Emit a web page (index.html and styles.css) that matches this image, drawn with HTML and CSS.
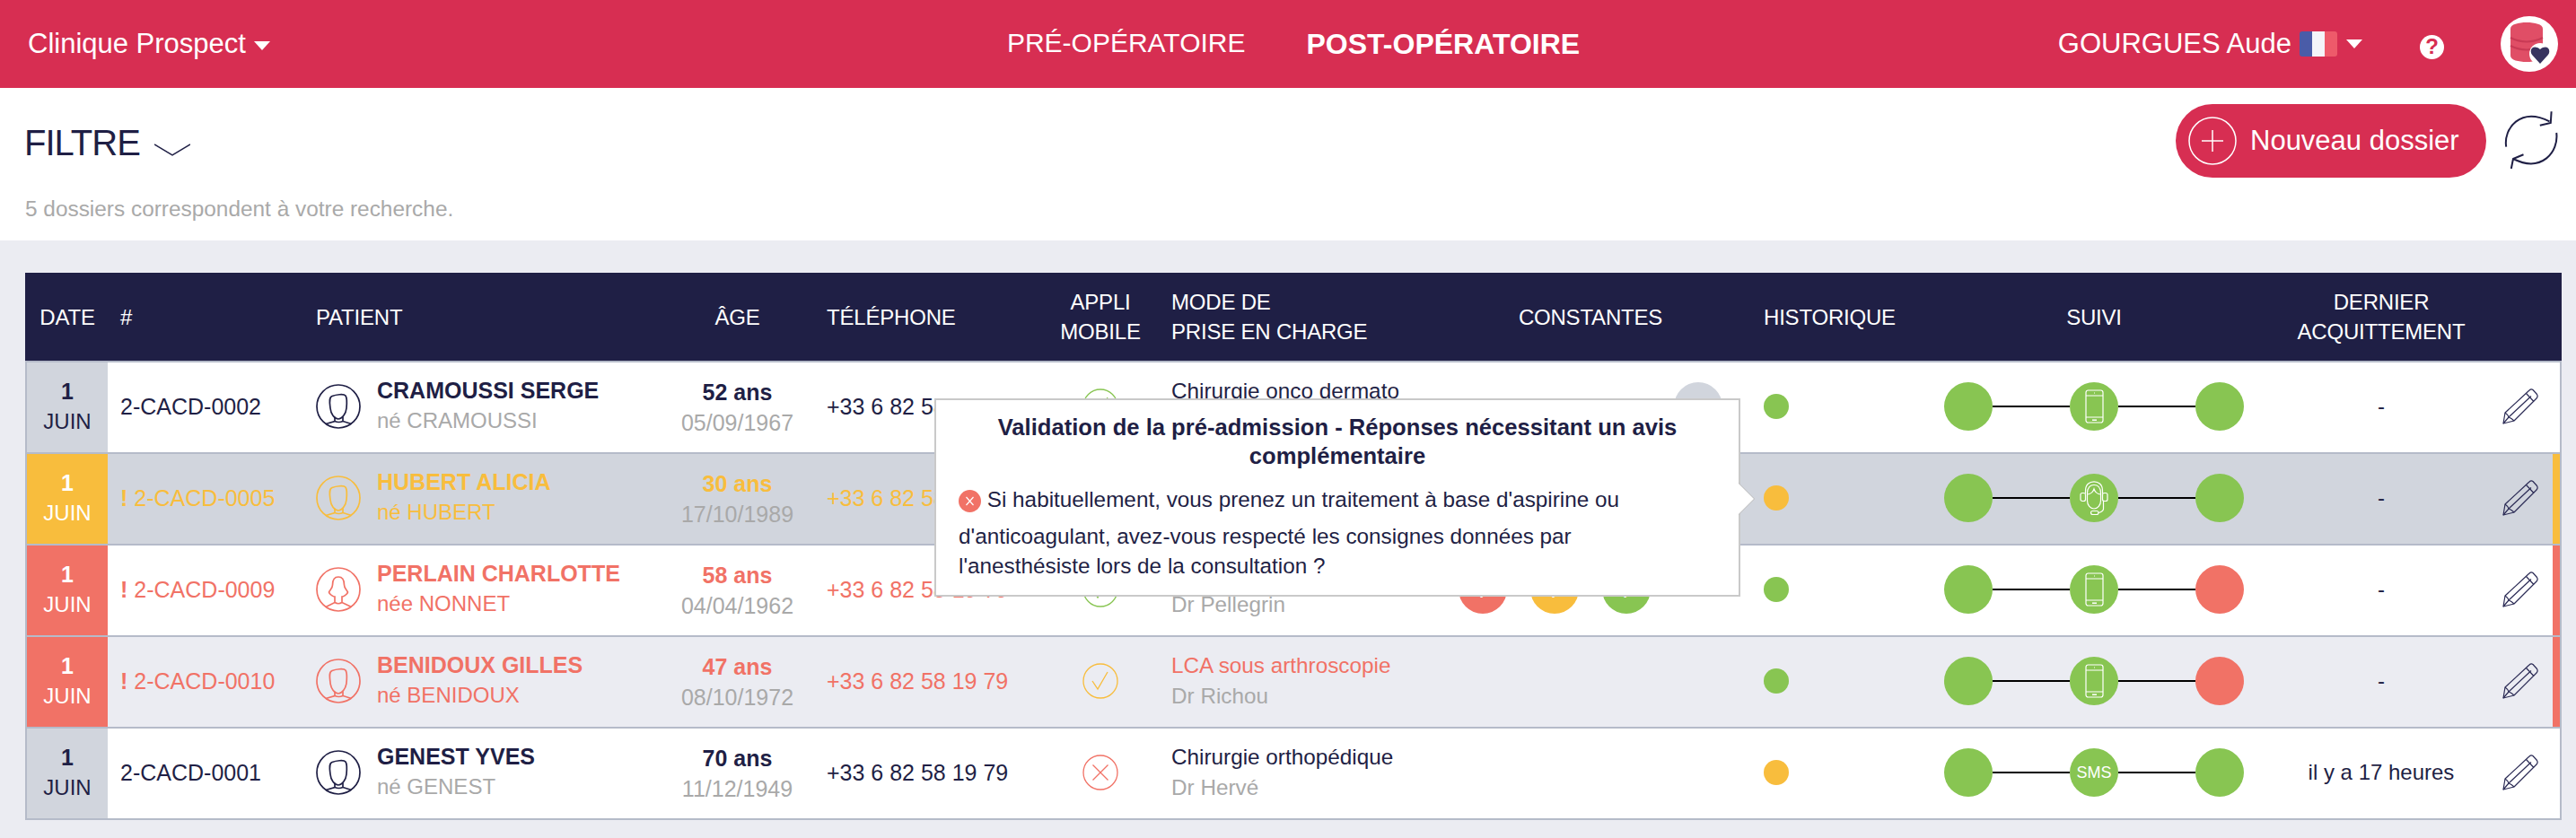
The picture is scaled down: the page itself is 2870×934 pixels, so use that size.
FILE: index.html
```html
<!DOCTYPE html>
<html lang="fr">
<head>
  <meta charset="UTF-8" />
  <title>Dossiers post-opératoires</title>
  <link rel="stylesheet" href="styles.css">
</head>
<body>
  <svg class="sprite" xmlns="http://www.w3.org/2000/svg">
    <symbol id="man" viewBox="0 0 50 50">
      <g fill="none" stroke="currentColor" stroke-width="1.7">
        <circle cx="25" cy="25" r="24"/>
        <path d="M18 13.5C22 12 31 10.5 33 13C35 16 34.5 22 34 27C33.5 33 29 39 25 39C20.5 39 16.5 33 16 27C15.5 22 14 15 18 13.5Z"/>
        <path d="M11 44.500L21 41.500V36.500M30 36.500V41.500L39.500 44.500M21 41.500Q25.500 43.500 30 41.500"/>
      </g>
    </symbol>
    <symbol id="woman" viewBox="0 0 50 50">
      <g fill="none" stroke="currentColor" stroke-width="1.7">
        <circle cx="25" cy="25" r="24"/>
        <path d="M25 11C20 11 18.500 15 18.500 20C18.500 24 15 26 14.500 28C15 31 20 33 21 33V39.500L11 44.500M25 11C30 11 31.500 15 31.500 20C31.500 24 35 26 35.500 28C35 31 30 33 29 33V39.500L39.500 44.500M21 39.500Q25 42 29 39.500"/>
      </g>
    </symbol>
    <symbol id="phone" viewBox="0 0 21 38">
      <g fill="none" stroke="#fff" stroke-width="1.200">
        <rect x="1" y="1" width="19" height="36" rx="2.500"/>
        <path d="M1 7H20M1 31H20"/>
        <path d="M8 34.200H13" stroke-width="1.500"/>
        <path d="M10 4H11"/>
      </g>
    </symbol>
    <symbol id="headset" viewBox="0 0 32 38">
      <g fill="none" stroke="#fff" stroke-width="1.200">
        <path d="M6.500 14V11C6.500 4 11 .8 16 .8C21 .8 25.500 4 25.500 11V14"/>
        <path d="M8.500 14C8.500 7 12 4.500 16 4.500C20 4.500 23.500 7 23.500 14V22C23.500 27 20 31 16 31C12 31 8.500 27 8.500 22Z"/>
        <path d="M8.500 15C12 15 15 12 16 9C17 12 20 15 23.500 15"/>
        <rect x="1" y="13.500" width="5.500" height="9" rx="2"/>
        <rect x="25.500" y="13.500" width="5.500" height="9" rx="2"/>
        <path d="M26.500 22.500V31C26.500 33 25 34.500 21 35.500"/>
        <rect x="12.500" y="33.500" width="8.500" height="4" rx="2"/>
      </g>
    </symbol>
    <symbol id="pencil" viewBox="0 0 40 40">
      <g fill="none" stroke="#2b2b55" stroke-width="1.200" stroke-linejoin="round">
        <path d="M1 39L3 27L30 2Q32 0 34 1.500L38.500 6.500Q40 9 38 11L13 36Z"/>
        <path d="M26.500 5.500L35 14.500M7.500 31.500L32 8.500M3 27Q6 29 7 32Q10 33 13 36M1 39L7 32"/>
      </g>
    </symbol>
    <symbol id="check" viewBox="0 0 40 40">
      <g fill="none" stroke="currentColor" stroke-width="1.300">
        <circle cx="20" cy="20" r="19"/>
        <path d="M11 20L17 29L28 10"/>
      </g>
    </symbol>
    <symbol id="cross" viewBox="0 0 40 40">
      <g fill="none" stroke="currentColor" stroke-width="1.300">
        <circle cx="20" cy="20" r="19"/>
        <path d="M11.500 11.500L28.500 28.500M28.500 11.500L11.500 28.500"/>
      </g>
    </symbol>
  </svg>

  <header class="topbar">
    <div class="clinic">Clinique Prospect <span class="caret"></span></div>
    <nav class="tabs">
      <a class="tab">PRÉ-OPÉRATOIRE</a>
      <a class="tab active">POST-OPÉRATOIRE</a>
    </nav>
    <div class="user">
      <span class="user-name">GOURGUES Aude</span>
      <span class="flag"><i class="flag-b"></i><i class="flag-w"></i><i class="flag-r"></i></span>
      <span class="caret"></span>
      <span class="help">?</span>
      <span class="logo">
        <svg width="46" height="50" viewBox="0 0 46 50">
          <path d="M2 8C2 3 11 1 20 1C29 1 38 3 38 8V38C38 43 29 45 20 45C11 45 2 43 2 38Z" fill="#e04e66"/>
          <path d="M2 18Q20 27 38 18M2 27Q20 36 38 27" fill="none" stroke="#c93a55" stroke-width="2"/>
          <circle cx="35" cy="36" r="12" fill="#fff"/>
          <path d="M35 47L26 37C22 31 28 25 35 31C42 25 48 31 44 37Z" fill="#37335f"/>
        </svg>
      </span>
    </div>
  </header>

  <section class="toolbar">
    <div>
      <div class="filter">FILTRE
        <svg class="chevron" width="40" height="14" viewBox="0 0 40 14"><path d="M0 1L20 13L40 1" fill="none" stroke="#1f1f45" stroke-width="1.500"/></svg>
      </div>
      <p class="count">5 dossiers correspondent à votre recherche.</p>
    </div>
    <div class="actions">
      <button class="new-btn">
        <svg width="54" height="54" viewBox="0 0 54 54"><g fill="none" stroke="#fff" stroke-width="1.500"><circle cx="27" cy="27" r="26"/><path d="M27 15V39M15 27H39"/></g></svg>
        Nouveau dossier
      </button>
      <svg class="refresh" width="60" height="66" viewBox="0 0 60 66">
        <g fill="none" stroke="#1f1f45" stroke-width="2">
          <path d="M2.200 40.700C-1 20 18 -4 50.500 12.300M52.600 1.300L51.800 14L39.800 16.700"/>
          <path d="M58.200 25C61 46 42 70 10 54M21.500 49.300L10 54L7.800 65"/>
        </g>
      </svg>
    </div>
  </section>

  <main class="content">
    <div class="table-wrap">
      <div class="thead cols">
        <div class="th center">DATE</div>
        <div class="th th-num">#</div>
        <div class="th th-patient">PATIENT</div>
        <div class="th center">ÂGE</div>
        <div class="th th-phone">TÉLÉPHONE</div>
        <div class="th center">APPLI<br>MOBILE</div>
        <div class="th th-mode">MODE DE<br>PRISE EN CHARGE</div>
        <div class="th center">CONSTANTES</div>
        <div class="th th-hist">HISTORIQUE</div>
        <div class="th center">SUIVI</div>
        <div class="th center">DERNIER<br>ACQUITTEMENT</div>
        <div class="th"></div>
      </div>

      <div class="tbody">
        <div class="row cols">
          <div class="date"><b>1</b><span>JUIN</span></div>
          <div class="num">2-CACD-0002</div>
          <div class="patient">
            <svg class="avatar"><use href="#man"/></svg>
            <div class="who"><div class="name">CRAMOUSSI SERGE</div><div class="sub">né CRAMOUSSI</div></div>
          </div>
          <div class="age"><b>52 ans</b><span>05/09/1967</span></div>
          <div class="phone">+33 6 82 58 19 79</div>
          <div class="appli ok"><svg class="appli-icon"><use href="#check"/></svg></div>
          <div class="mode"><div class="mode-name">Chirurgie onco dermato</div><div class="doctor">&nbsp;</div></div>
          <div class="constants">
            <span class="c-dot blank"></span><span class="c-dot blank"></span><span class="c-dot blank"></span><span class="c-dot grey">?</span>
          </div>
          <div class="hist"><span class="h-dot green"></span></div>
          <div class="suivi">
            <span class="s-dot green"></span><span class="s-line"></span>
            <span class="s-dot green"><svg class="i-phone"><use href="#phone"/></svg></span><span class="s-line"></span>
            <span class="s-dot green"></span>
          </div>
          <div class="ack">-</div>
          <div class="edit"><svg class="pencil"><use href="#pencil"/></svg></div>
        </div>

        <div class="row cols warn tinted">
          <div class="date"><b>1</b><span>JUIN</span></div>
          <div class="num"><b>!</b> 2-CACD-0005</div>
          <div class="patient">
            <svg class="avatar"><use href="#man"/></svg>
            <div class="who"><div class="name">HUBERT ALICIA</div><div class="sub">né HUBERT</div></div>
          </div>
          <div class="age"><b>30 ans</b><span>17/10/1989</span></div>
          <div class="phone">+33 6 82 58 19 79</div>
          <div class="appli"></div>
          <div class="mode"></div>
          <div class="constants"></div>
          <div class="hist"><span class="h-dot yellow"></span></div>
          <div class="suivi">
            <span class="s-dot green"></span><span class="s-line"></span>
            <span class="s-dot green"><svg class="i-headset"><use href="#headset"/></svg></span><span class="s-line"></span>
            <span class="s-dot green"></span>
          </div>
          <div class="ack">-</div>
          <div class="edit"><svg class="pencil"><use href="#pencil"/></svg></div>
        </div>

        <div class="row cols alert">
          <div class="date"><b>1</b><span>JUIN</span></div>
          <div class="num"><b>!</b> 2-CACD-0009</div>
          <div class="patient">
            <svg class="avatar"><use href="#woman"/></svg>
            <div class="who"><div class="name">PERLAIN CHARLOTTE</div><div class="sub">née NONNET</div></div>
          </div>
          <div class="age"><b>58 ans</b><span>04/04/1962</span></div>
          <div class="phone">+33 6 82 58 19 79</div>
          <div class="appli ok"><svg class="appli-icon"><use href="#check"/></svg></div>
          <div class="mode"><div class="mode-name">&nbsp;</div><div class="doctor">Dr Pellegrin</div></div>
          <div class="constants">
            <span class="c-dot red">7</span><span class="c-dot yellow">7</span><span class="c-dot green">7</span><span class="c-dot blank"></span>
          </div>
          <div class="hist"><span class="h-dot green"></span></div>
          <div class="suivi">
            <span class="s-dot green"></span><span class="s-line"></span>
            <span class="s-dot green"><svg class="i-phone"><use href="#phone"/></svg></span><span class="s-line"></span>
            <span class="s-dot red"></span>
          </div>
          <div class="ack">-</div>
          <div class="edit"><svg class="pencil"><use href="#pencil"/></svg></div>
        </div>

        <div class="row cols alert light">
          <div class="date"><b>1</b><span>JUIN</span></div>
          <div class="num"><b>!</b> 2-CACD-0010</div>
          <div class="patient">
            <svg class="avatar"><use href="#man"/></svg>
            <div class="who"><div class="name">BENIDOUX GILLES</div><div class="sub">né BENIDOUX</div></div>
          </div>
          <div class="age"><b>47 ans</b><span>08/10/1972</span></div>
          <div class="phone">+33 6 82 58 19 79</div>
          <div class="appli pending"><svg class="appli-icon"><use href="#check"/></svg></div>
          <div class="mode"><div class="mode-name">LCA sous arthroscopie</div><div class="doctor">Dr Richou</div></div>
          <div class="constants"></div>
          <div class="hist"><span class="h-dot green"></span></div>
          <div class="suivi">
            <span class="s-dot green"></span><span class="s-line"></span>
            <span class="s-dot green"><svg class="i-phone"><use href="#phone"/></svg></span><span class="s-line"></span>
            <span class="s-dot red"></span>
          </div>
          <div class="ack">-</div>
          <div class="edit"><svg class="pencil"><use href="#pencil"/></svg></div>
        </div>

        <div class="row cols">
          <div class="date"><b>1</b><span>JUIN</span></div>
          <div class="num">2-CACD-0001</div>
          <div class="patient">
            <svg class="avatar"><use href="#man"/></svg>
            <div class="who"><div class="name">GENEST YVES</div><div class="sub">né GENEST</div></div>
          </div>
          <div class="age"><b>70 ans</b><span>11/12/1949</span></div>
          <div class="phone">+33 6 82 58 19 79</div>
          <div class="appli refused"><svg class="appli-icon"><use href="#cross"/></svg></div>
          <div class="mode"><div class="mode-name">Chirurgie orthopédique</div><div class="doctor">Dr Hervé</div></div>
          <div class="constants"></div>
          <div class="hist"><span class="h-dot yellow"></span></div>
          <div class="suivi">
            <span class="s-dot green"></span><span class="s-line"></span>
            <span class="s-dot green sms">SMS</span><span class="s-line"></span>
            <span class="s-dot green"></span>
          </div>
          <div class="ack">il y a 17 heures</div>
          <div class="edit"><svg class="pencil"><use href="#pencil"/></svg></div>
        </div>
      </div>

      <div class="tooltip">
        <h3 class="tooltip-title">Validation de la pré-admission - Réponses nécessitant un avis complémentaire</h3>
        <p class="tooltip-text"><svg class="tooltip-icon" width="25" height="25" viewBox="0 0 25 25"><circle cx="12.500" cy="12.500" r="12.500" fill="#f17266"/><path d="M8.500 8L16.500 17M16.500 8L8.500 17" stroke="#fff" stroke-width="1.200"/></svg> Si habituellement, vous prenez un traitement à base d'aspirine ou d'anticoagulant, avez-vous respecté les consignes données par l'anesthésiste lors de la consultation ?</p>
      </div>
    </div>
  </main>
</body>
</html>
```

FILE: styles.css
```css
* {
  box-sizing: border-box;
}
html, body {
  height: 100%;
}
body {
  margin: 0;
  background: #ebecf2;
  color: #1f1f45;
  font-family: "Liberation Sans", Arial, sans-serif;
  font-size: 25px;
  overflow: hidden;
}
.sprite {
  position: absolute;
  width: 0;
  height: 0;
}

/* top bar */
.topbar {
  display: grid;
  grid-template-columns: 1fr auto 1fr;
  align-items: center;
  height: 98px;
  padding: 0 20px 0 31px;
  background: #d72e52;
  color: #fff;
}
.clinic {
  font-size: 31px;
}
.caret {
  display: inline-block;
  width: 0;
  height: 0;
  border-left: 9px solid transparent;
  border-right: 9px solid transparent;
  border-top: 10px solid #fff;
  vertical-align: middle;
}
.tabs {
  display: flex;
  gap: 68px;
  margin-left: 1px;
}
.tab {
  font-size: 30px;
}
.tab.active {
  font-size: 32px;
  font-weight: bold;
}
.user {
  display: flex;
  justify-content: flex-end;
  align-items: center;
}
.user-name {
  font-size: 31px;
  margin-right: 9px;
}
.flag {
  display: flex;
  width: 42px;
  height: 28px;
  margin-right: 10px;
  border-radius: 3px;
  overflow: hidden;
}
.flag i {
  flex: 1;
}
.flag-b { background: #4a5ca8; }
.flag-w { background: #f4f5f9; }
.flag-r { background: #ee5a6a; }
.help {
  display: flex;
  align-items: center;
  justify-content: center;
  width: 27px;
  height: 27px;
  margin: 6px 63px 0 64px;
  border-radius: 50%;
  background: #fff;
  color: #d72e52;
  font-size: 24px;
  font-weight: bold;
}
.logo {
  display: flex;
  align-items: center;
  justify-content: center;
  width: 64px;
  height: 62px;
  border-radius: 50%;
  background: #fff;
}

/* filter bar */
.toolbar {
  display: flex;
  justify-content: space-between;
  height: 170px;
  padding: 18px 20px 0 27px;
  background: #fff;
}
.filter {
  display: flex;
  align-items: center;
  gap: 16px;
  margin-top: 21px;
  font-size: 40px;
  letter-spacing: -1px;
  line-height: 44px;
}
.chevron {
  margin-top: 15px;
}
.count {
  margin: 38px 0 0;
  padding-left: 1px;
  color: #a9a9a9;
  font-size: 24.4px;
  line-height: 28px;
}
.actions {
  display: flex;
  align-items: flex-start;
  gap: 20px;
}
.new-btn {
  display: flex;
  align-items: center;
  gap: 15px;
  width: 346px;
  height: 82px;
  padding: 0 14px;
  border: none;
  border-radius: 41px;
  background: #d72e52;
  color: #fff;
  font-family: inherit;
  font-size: 31px;
}
.refresh {
  margin-top: 7px;
}

/* table */
.content {
  padding: 36px 16px 0 28px;
}
.table-wrap {
  position: relative;
  width: 2826px;
}
.cols {
  display: grid;
  grid-template-columns: 90px 232px 408px 123px 287px 112px 318px 344px 191px 396px 244px 77px;
}
.thead {
  height: 98px;
  padding: 0 2px;
  background: #1f1f45;
  color: #fff;
  font-size: 24px;
  letter-spacing: -.2px;
  line-height: 33px;
}
.th {
  align-self: center;
}
.center {
  text-align: center;
}
.th-num {
  padding-left: 14px;
}
.th-mode {
  padding-left: 23px;
}
.th-phone {
  padding-left: 38px;
}
.th-hist {
  padding-left: 21px;
}
.tbody {
  border: 2px solid #b5bbc9;
  border-bottom: none;
}
.row {
  height: 102px;
  border-bottom: 2px solid #b5bbc9;
  background: #fff;
  line-height: 34px;
}
.row > div {
  display: flex;
  align-items: center;
  padding-bottom: 2px;
}
.tinted { background: #d1d5dd; }
.light { background: #ebecf2; }

.row > .date {
  flex-direction: column;
  justify-content: center;
  background: #d1d5dd;
  font-size: 24px;
}
.date b {
  font-size: 25px;
}
.warn .date {
  background: #f8bd3d;
  color: #fff;
}
.alert .date {
  background: #f17266;
  color: #fff;
}
.num {
  padding-left: 14px;
}
.num b {
  margin-right: 7px;
}
.patient {
  gap: 18px;
}
.who {
  margin-bottom: 2px;
}
.avatar {
  width: 50px;
  height: 50px;
}
.name {
  font-weight: bold;
}
.sub {
  font-size: 24px;
  color: #a9a9a9;
}
.row > .age {
  flex-direction: column;
  justify-content: center;
  padding-bottom: 0;
}
.age span {
  color: #a9a9a9;
}
.row > .phone {
  padding-left: 38px;
}
.row > .appli {
  justify-content: center;
  color: #88c552;
}
.appli-icon {
  width: 40px;
  height: 40px;
}
.row > .pending { color: #f8bd3d; }
.row > .refused { color: #f17266; }
.row > .mode {
  flex-direction: column;
  align-items: flex-start;
  justify-content: center;
  padding-left: 23px;
  font-size: 24.3px;
}
.doctor {
  color: #a9a9a9;
}
.row > .constants {
  justify-content: center;
  gap: 26px;
}
.c-dot, .s-dot {
  display: flex;
  align-items: center;
  justify-content: center;
  width: 54px;
  height: 54px;
  border-radius: 50%;
  color: #fff;
  flex: none;
}
.c-dot.blank {
  visibility: hidden;
}
.c-dot.grey {
  background: #d1d5dd;
  color: #1f1f45;
}
.green { background: #88c552; }
.yellow { background: #f8bd3d; }
.red { background: #f17266; }
.row > .hist {
  padding-left: 21px;
}
.h-dot {
  width: 28px;
  height: 28px;
  border-radius: 50%;
}
.row > .suivi {
  justify-content: center;
}
.s-line {
  width: 86px;
  height: 2px;
  background: #000;
}
.i-phone {
  width: 21px;
  height: 38px;
}
.i-headset {
  width: 32px;
  height: 38px;
}
.sms {
  font-size: 18px;
}
.row > .ack {
  justify-content: center;
  color: #1f1f45;
  font-size: 24px;
}
.row > .edit {
  padding-left: 13px;
  border-right: 8px solid transparent;
}
.warn .edit { border-right-color: #f8bd3d !important; }
.alert .edit { border-right-color: #f17266 !important; }
.pencil {
  width: 40px;
  height: 40px;
}

/* row colours */
.warn .num, .warn .name, .warn .sub, .warn .age b, .warn .phone, .warn .avatar, .warn .mode-name {
  color: #f8bd3d;
}
.alert .num, .alert .name, .alert .sub, .alert .age b, .alert .phone, .alert .avatar, .alert .mode-name {
  color: #f17266;
}

/* tooltip over the table */
.tooltip {
  position: absolute;
  left: 1013px;
  top: 140px;
  width: 898px;
  height: 221px;
  padding: 14px 25px 0;
  border: 2px solid #c9c9c9;
  background: #fff;
  z-index: 2;
}
.tooltip::before, .tooltip::after {
  content: "";
  position: absolute;
  top: 92px;
  width: 0;
  height: 0;
  border-top: 18px solid transparent;
  border-bottom: 18px solid transparent;
  border-left: 18px solid #b9b9b9;
}
.tooltip::before {
  left: 100%;
}
.tooltip::after {
  left: calc(100% - 1px);
  border-left-color: #fff;
}
.tooltip-title {
  margin: 0;
  font-size: 25.6px;
  line-height: 32px;
  text-align: center;
}
.tooltip-text {
  margin: 16px 0 0;
  padding-right: 60px;
  font-size: 24.3px;
  line-height: 33px;
}
.tooltip-icon {
  margin-bottom: 10px;
  vertical-align: -16px;
}
```
